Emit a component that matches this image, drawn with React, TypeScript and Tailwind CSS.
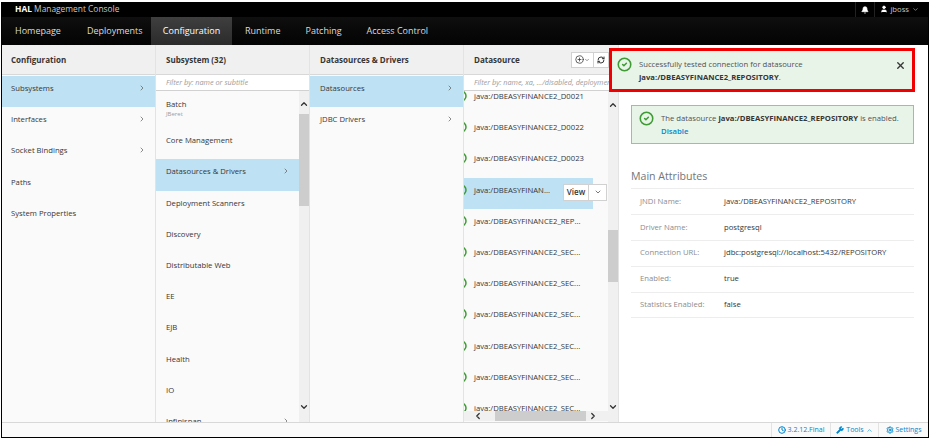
import type { ReactNode } from "react";
import { ChevronRight, ChevronDown, ChevronUp, ChevronLeft, Bell, User, Wrench, Settings, X, RefreshCw, CirclePlus, CircleCheck, Clock } from "lucide-react";

function Cell({ label, active, sub, arrow, first }: { label: string; active?: boolean; sub?: string; arrow?: boolean; first?: boolean }) {
  return (
    <div className={`h-[31.2px] shrink-0 pr-[9px] flex justify-between ${first ? "pl-[9px]" : "pl-[10px]"} ${sub ? "pt-[1px]" : "pt-[6px]"} ${active ? "bg-[#bee1f4]" : ""}`}>
      <div>
        <div className="leading-[12px] text-[7.7px] text-[#363636] whitespace-nowrap">{label}</div>
        {sub && <div className="leading-[8px] text-[6px] text-[#9c9c9c]">{sub}</div>}
      </div>
      {arrow && <ChevronRight className="w-[8px] h-[8px] mt-[2px] text-[#555]" strokeWidth={2} />}
    </div>
  );
}

function ColHeader({ title, children, first }: { title: string; children?: ReactNode; first?: boolean }) {
  return (
    <div className={`h-[30px] shrink-0 bg-[#f0f0f0] border-b border-[#d8d8d8] flex items-center justify-between pr-[4px] ${first ? "pl-[9px]" : "pl-[10px]"}`}>
      <span className="text-[8px] font-bold text-[#363636] whitespace-nowrap">{title}</span>
      {children}
    </div>
  );
}

function Filter({ text }: { text: string }) {
  return (
    <div className="h-[16px] shrink-0 bg-white border-b border-[#d1d1d1] pl-[10px] flex items-center overflow-hidden">
      <span className="text-[7.3px] italic text-[#9c9c9c] whitespace-nowrap">{text}</span>
    </div>
  );
}

function VBar({ thumbTop, thumbH, upTop }: { thumbTop: string; thumbH: string; upTop: string }) {
  return (
    <div className="w-[10px] shrink-0 bg-[#f0f0f0] relative">
      <ChevronUp className={`absolute left-0 w-[10px] h-[10px] text-[#333] ${upTop}`} strokeWidth={3} />
      <div className={`absolute left-0 right-0 bg-[#cdcdcd] ${thumbTop} ${thumbH}`} />
      <ChevronDown className="absolute left-0 bottom-[10px] w-[10px] h-[10px] text-[#333]" strokeWidth={3} />
    </div>
  );
}

function DsRow({ label, active }: { label: string; active?: boolean }) {
  return (
    <div className={`h-[31.2px] shrink-0 flex items-start pt-[6px] relative ${active ? "bg-[#bee1f4]" : ""}`}>
      <CircleCheck className="w-[12px] h-[12px] ml-[-9px] shrink-0 text-[#3f9c35]" strokeWidth={3} />
      <span className="ml-[7px] leading-[12px] text-[7.7px] text-[#363636] whitespace-nowrap">{label}</span>
      {active && (
        <div className="absolute left-[99px] top-[6px] h-[17px] flex bg-white border border-[#d1d1d1] text-[8px] font-semibold text-[#363636]">
          <span className="w-[25px] flex items-center justify-center border-r border-[#d1d1d1]">View</span>
          <span className="w-[17px] flex items-center justify-center">
            <ChevronDown className="w-[8px] h-[8px]" strokeWidth={2} />
          </span>
        </div>
      )}
    </div>
  );
}

function Attr({ k, v }: { k: string; v: string }) {
  return (
    <div className="h-[25.9px] border-b border-[#ededed] flex items-center pl-[9px] text-[7.7px]">
      <span className="w-[84px] text-[#8b8d8f]">{k}</span>
      <span className="text-[#363636]">{v}</span>
    </div>
  );
}

export default function App() {
  return (
    <div className="w-[931px] h-[441px] bg-white overflow-hidden pt-[2px] pl-[1px] relative" style={{ fontFamily: '"Open Sans", sans-serif' }}>
      <div className="w-[928px] h-[436px] flex flex-col border-x border-black border-b">
        <div className="h-[15px] shrink-0 bg-black flex items-center justify-between pl-[13px] pr-[9px] text-[8.4px] text-[#c8c8c8]">
          <div className="whitespace-nowrap"><b className="text-white">HAL</b> Management Console</div>
          <div className="flex items-center h-full">
            <div className="w-[20px] h-full border-x border-[#222] flex items-center justify-center">
              <Bell className="w-[8px] h-[8px] text-white fill-white" />
            </div>
            <div className="ml-[5px] flex items-center gap-[2px]">
              <User className="w-[8px] h-[8px] text-white fill-white" />
              <span className="text-[7.7px]">jboss</span>
              <ChevronDown className="w-[7px] h-[7px] ml-[1px]" />
            </div>
          </div>
        </div>
        <div className="h-[28px] shrink-0 flex items-stretch text-[9px] text-[#dcdcdc] bg-gradient-to-b from-[#0f0f0f] to-[#040404]">
          <div className="w-[149px] flex items-center pl-[13px] gap-[26px]"><span>Homepage</span><span>Deployments</span></div>
          <div className="w-[81px] bg-gradient-to-b from-[#3f3f3f] to-[#2b2b2b] text-white flex items-center justify-center">Configuration</div>
          <div className="flex items-center pl-[13px] gap-[25px]"><span>Runtime</span><span>Patching</span><span>Access Control</span></div>
        </div>
        <div className="flex-1 min-h-0 flex">
          <div className="w-[154px] shrink-0 bg-[#fafafa] border-r border-[#e3e3e3] flex flex-col">
            <ColHeader first title="Configuration" />
            <div className="pt-[1px]">
              <Cell first label="Subsystems" active arrow />
              <Cell first label="Interfaces" arrow />
              <Cell first label="Socket Bindings" arrow />
              <Cell first label="Paths" />
              <Cell first label="System Properties" />
            </div>
          </div>
          <div className="w-[154px] shrink-0 bg-[#fafafa] border-r border-[#e3e3e3] flex flex-col">
            <ColHeader title="Subsystem (32)" />
            <Filter text="Filter by: name or subtitle" />
            <div className="flex-1 min-h-0 flex overflow-hidden">
              <div className="flex-1 pt-[6px] overflow-hidden">
                <Cell label="Batch" sub="JBeret" />
                <Cell label="Core Management" />
                <Cell label="Datasources & Drivers" active arrow />
                <Cell label="Deployment Scanners" />
                <Cell label="Discovery" />
                <Cell label="Distributable Web" />
                <Cell label="EE" />
                <Cell label="EJB" />
                <Cell label="Health" />
                <Cell label="IO" />
                <Cell label="Infinispan" arrow />
              </div>
              <VBar upTop="top-[8px]" thumbTop="top-[23px]" thumbH="h-[92px]" />
            </div>
          </div>
          <div className="w-[154px] shrink-0 bg-[#fafafa] border-r border-[#e3e3e3] flex flex-col">
            <ColHeader title="Datasources & Drivers" />
            <div className="pt-[1px]">
              <Cell label="Datasources" active arrow />
              <Cell label="JDBC Drivers" arrow />
            </div>
          </div>
          <div className="w-[155px] shrink-0 bg-[#fafafa] border-r border-[#e3e3e3] flex flex-col">
            <ColHeader title="Datasource">
              <div className="flex mr-[5px]">
                <div className="w-[23px] h-[16px] bg-white border border-[#d1d1d1] flex items-center justify-center">
                  <CirclePlus className="w-[9px] h-[9px] text-[#333]" />
                  <ChevronDown className="w-[6px] h-[6px] text-[#333]" />
                </div>
                <div className="w-[15px] h-[16px] bg-white border-y border-r border-[#d1d1d1] flex items-center justify-center">
                  <RefreshCw className="w-[8px] h-[8px] text-[#333]" strokeWidth={3} />
                </div>
              </div>
            </ColHeader>
            <Filter text="Filter by: name, xa, .../disabled, deployment" />
            <div className="flex-1 min-h-0 flex overflow-hidden">
              <div className="flex-1 min-w-0 flex flex-col">
                <div className="flex-1 min-h-0 overflow-hidden">
                  <div className="mt-[-7px]">
                    <DsRow label="java:/DBEASYFINANCE2_D0021" />
                    <DsRow label="java:/DBEASYFINANCE2_D0022" />
                    <DsRow label="java:/DBEASYFINANCE2_D0023" />
                    <div className="w-[129px]"><DsRow label="java:/DBEASYFINAN..." active /></div>
                    <DsRow label="java:/DBEASYFINANCE2_REP..." />
                    <DsRow label="java:/DBEASYFINANCE2_SEC..." />
                    <DsRow label="java:/DBEASYFINANCE2_SEC..." />
                    <DsRow label="java:/DBEASYFINANCE2_SEC..." />
                    <DsRow label="java:/DBEASYFINANCE2_SEC..." />
                    <DsRow label="java:/DBEASYFINANCE2_SEC..." />
                    <DsRow label="java:/DBEASYFINANCE2_SEC..." />
                  </div>
                </div>
                <div className="h-[10px] shrink-0 bg-[#f0f0f0] flex items-center relative mb-[1px]">
                  <ChevronLeft className="absolute left-[9px] w-[10px] h-[10px] text-[#333]" strokeWidth={3} />
                  <div className="absolute left-[31px] w-[91px] h-full bg-[#cdcdcd]" />
                  <ChevronRight className="absolute left-[124px] w-[10px] h-[10px] text-[#333]" strokeWidth={3} />
                </div>
              </div>
              <VBar upTop="top-[9px]" thumbTop="top-[139px]" thumbH="h-[52px]" />
            </div>
          </div>
          <div className="flex-1 min-w-0 bg-white pl-[12px] pr-[14px] pt-[60px]">
            <div className="h-[39px] bg-[#e9f4e9] border border-[#90c990] flex pl-[7px] pt-[5px]">
              <CircleCheck className="w-[15px] h-[15px] text-[#3f9c35] shrink-0" strokeWidth={2.5} />
              <div className="ml-[7px] text-[7.7px] leading-[12.5px] text-[#4d5258] pt-[1px]">
                <div>The datasource <b className="text-[#363636]">java:/DBEASYFINANCE2_REPOSITORY</b> is enabled.</div>
                <div className="text-[#0088ce] font-semibold">Disable</div>
              </div>
            </div>
            <div className="mt-[24px] text-[10.6px] leading-[17px] text-[#72767b] pb-[3px] border-b border-[#ededed]">Main Attributes</div>
            <Attr k="JNDI Name:" v="java:/DBEASYFINANCE2_REPOSITORY" />
            <Attr k="Driver Name:" v="postgresql" />
            <Attr k="Connection URL:" v="jdbc:postgresql://localhost:5432/REPOSITORY" />
            <Attr k="Enabled:" v="true" />
            <Attr k="Statistics Enabled:" v="false" />
          </div>
        </div>
        <div className="h-[15px] shrink-0 bg-[#fafafa] border-t border-[#d8d8d8] flex justify-end text-[7px] text-[#0088ce]">
          <div className="w-[59px] border-l border-[#e3e3e3] flex items-center justify-center gap-[2px]"><Clock className="w-[8px] h-[8px]" strokeWidth={3} />3.2.12.Final</div>
          <div className="w-[48px] border-l border-[#e3e3e3] flex items-center justify-center gap-[2px]"><Wrench className="w-[8px] h-[8px] fill-[#0088ce]" />Tools<ChevronUp className="w-[7px] h-[7px]" /></div>
          <div className="w-[50px] border-l border-[#e3e3e3] flex items-center justify-center gap-[2px]"><Settings className="w-[8px] h-[8px]" strokeWidth={3} />Settings</div>
        </div>
      </div>
      <div className="absolute left-[609px] top-[48px] w-[306px] h-[44px] border-[3px] border-[#f00000] bg-[#e9f4e9] flex pl-[5px] pt-[6px] z-10">
        <CircleCheck className="w-[15px] h-[15px] text-[#3f9c35] shrink-0" strokeWidth={2.5} />
        <div className="ml-[7px] flex-1 pt-[1px] text-[7.7px] leading-[12.5px] text-[#4d5258]">
          <div>Successfully tested connection for datasource</div>
          <div><b className="text-[#363636]">java:/DBEASYFINANCE2_REPOSITORY</b>.</div>
        </div>
        <X className="w-[11px] h-[11px] mr-[6px] mt-[3px] text-[#363636]" strokeWidth={3} />
      </div>
    </div>
  );
}
